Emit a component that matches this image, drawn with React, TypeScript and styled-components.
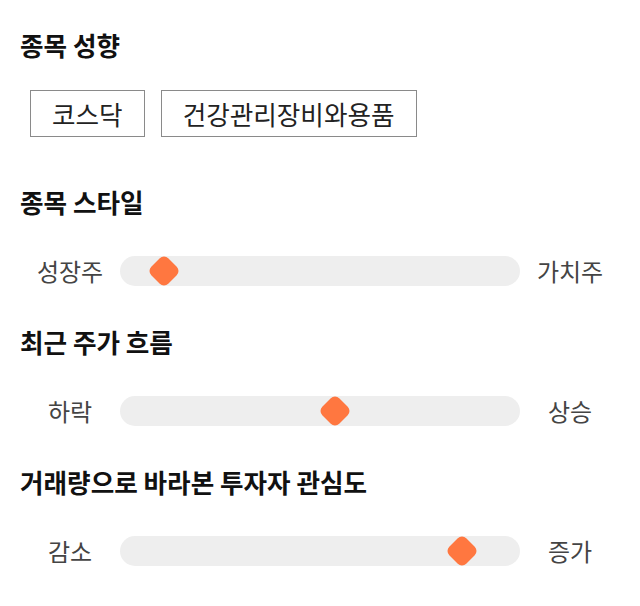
import React from "react";
import styled, { createGlobalStyle } from "styled-components";

const Global = createGlobalStyle`
  html, body { margin: 0; padding: 0; background: #fff; }
  body { font-family: "Noto Sans CJK KR", "Noto Sans", sans-serif; }
`;

const Page = styled.div`
  width: 640px;
  box-sizing: border-box;
  padding: 30px 20px 0;
  display: flex;
  flex-direction: column;
`;

const Section = styled.section<{ $gap: number; $after: number }>`
  display: flex;
  flex-direction: column;
  gap: ${(p) => p.$gap}px;
  margin-bottom: ${(p) => p.$after}px;
`;

const Title = styled.h2`
  margin: 0;
  font-size: 25.6px;
  line-height: 30px;
  font-weight: 700;
  color: #111;
`;

const Chips = styled.div`
  display: flex;
  gap: 16px;
  padding-left: 10px;
`;

const Chip = styled.span`
  display: inline-flex;
  align-items: center;
  height: 47px;
  box-sizing: border-box;
  padding: 0 21px;
  border: 1px solid #8a8a8a;
  font-size: 25.6px;
  color: #222;
`;

const SliderRow = styled.div`
  display: grid;
  grid-template-columns: 100px 1fr 100px;
  align-items: center;
`;

const Label = styled.span`
  text-align: center;
  font-size: 24px;
  line-height: 30px;
  color: #444;
`;

const Track = styled.div`
  position: relative;
  height: 30px;
  border-radius: 15px;
  background: #eeeeee;
`;

const Thumb = styled.div`
  position: absolute;
  top: 50%;
  width: 24px;
  height: 24px;
  border-radius: 6px;
  background: #ff7740;
  transform: translate(-50%, -50%) rotate(45deg);
`;

const sliders = [
  { title: "종목 스타일", left: "성장주", right: "가치주", pos: 11 },
  { title: "최근 주가 흐름", left: "하락", right: "상승", pos: 53.75 },
  { title: "거래량으로 바라본 투자자 관심도", left: "감소", right: "증가", pos: 85.5 },
];

export default function App() {
  return (
    <>
      <Global />
      <Page>
        <Section $gap={30} $after={50}>
          <Title>종목 성향</Title>
          <Chips>
            <Chip>코스닥</Chip>
            <Chip>건강관리장비와용품</Chip>
          </Chips>
        </Section>
        {sliders.map((s) => (
          <Section key={s.title} $gap={39} $after={41}>
            <Title>{s.title}</Title>
            <SliderRow>
              <Label>{s.left}</Label>
              <Track>
                <Thumb style={{ left: `${s.pos}%` }} />
              </Track>
              <Label>{s.right}</Label>
            </SliderRow>
          </Section>
        ))}
      </Page>
    </>
  );
}
